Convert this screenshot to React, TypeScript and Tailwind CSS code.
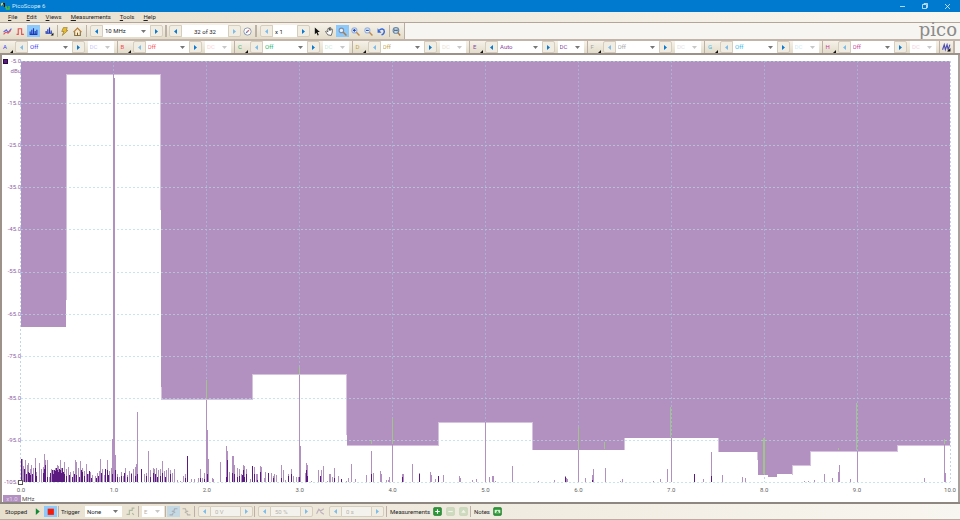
import React from "react"

const channels = [
  { name: "A", value: "Off", color: "text-[#3b3bf5]", dim: "text-[#c9c9fa]", prevOff: true },
  { name: "B", value: "Off", color: "text-[#fb4a4f]", dim: "text-[#fbd3d3]", prevOff: true },
  { name: "C", value: "Off", color: "text-[#23b568]", dim: "text-[#c8ecd8]", prevOff: true },
  { name: "D", value: "Off", color: "text-[#c6a13c]", dim: "text-[#ebe3cc]", prevOff: true },
  { name: "E", value: "Auto", color: "text-[#8a44a2]", dim: "text-[#8a44a2]", prevOff: false },
  { name: "F", value: "Off", color: "text-[#a3a3a3]", dim: "text-[#e2e2e2]", prevOff: true },
  { name: "G", value: "Off", color: "text-[#35b9ec]", dim: "text-[#cdecf8]", prevOff: true },
  { name: "H", value: "Off", color: "text-[#c83c93]", dim: "text-[#f3d2e3]", prevOff: true },
]

const menus = ["File", "Edit", "Views", "Measurements", "Tools", "Help"]

const yLabels = [
  "-5.0", "-15.0", "-25.0", "-35.0", "-45.0", "-55.0",
  "-65.0", "-75.0", "-85.0", "-95.0", "-105.0",
]
const xLabels = [
  "0.0", "1.0", "2.0", "3.0", "4.0", "5.0", "6.0", "7.0", "8.0", "9.0", "10.0",
]

// [x, height] pairs measured from the bottom of the plot
const spikes = [
  [22, 23], [23, 16], [25, 22], [27, 17], [28, 19], [30, 13], [31, 17], [33, 14],
  [35, 24], [36, 10], [39, 19], [41, 13], [43, 15], [44, 28], [45, 22], [47, 22],
  [49, 5], [51, 13], [53, 12], [55, 14], [57, 17], [58, 16], [60, 22], [61, 14],
  [62, 14], [64, 20], [66, 13], [68, 15], [70, 10], [73, 11], [75, 22], [76, 20],
  [78, 14], [80, 21], [82, 14], [84, 11], [86, 18], [88, 8], [90, 10], [92, 7],
  [95, 6], [97, 9], [99, 11], [100, 23], [102, 13], [104, 7], [105, 13], [107, 22],
  [109, 11], [111, 14], [112, 43], [115, 27], [117, 8], [119, 5], [121, 10],
  [123, 6], [125, 14], [127, 7], [129, 11], [131, 9], [133, 13], [135, 15],
  [136, 18], [137, 70], [141, 10], [144, 8], [146, 9], [148, 31], [150, 12],
  [153, 14], [154, 13], [156, 14], [158, 12], [160, 13], [162, 21], [164, 11],
  [166, 12], [168, 14], [170, 12], [172, 9], [174, 13], [177, 2], [180, 1],
  [183, 6], [185, 8], [191, 3], [194, 3], [198, 4], [200, 13], [202, 4], [204, 9],
  [206, 82], [207, 52], [208, 23], [212, 4], [213, 3], [220, 20], [226, 36],
  [227, 31], [229, 10], [232, 26], [233, 26], [234, 17], [237, 14], [239, 13],
  [241, 8], [243, 17], [244, 16], [246, 13], [250, 3], [252, 16], [254, 15],
  [256, 8], [257, 8], [260, 16], [261, 15], [264, 4], [265, 10], [268, 9],
  [271, 9], [273, 6], [274, 8], [276, 7], [281, 17], [283, 12], [285, 2],
  [288, 8], [291, 13], [293, 6], [296, 5], [298, 5], [299, 107], [300, 36],
  [305, 9], [306, 19], [307, 17], [311, 1], [318, 12], [321, 12], [323, 16],
  [327, 1], [329, 8], [330, 8], [332, 5], [334, 14], [338, 6], [341, 3], [346, 1],
  [348, 4], [351, 18], [355, 3], [366, 7], [371, 31], [373, 9], [380, 11],
  [381, 8], [386, 2], [388, 2], [389, 5], [392, 37], [402, 8], [403, 8],
  [412, 18], [419, 9], [430, 10], [431, 7], [435, 3], [438, 6], [443, 7],
  [459, 6], [460, 4], [472, 2], [476, 3], [485, 60], [489, 5], [492, 6],
  [493, 6], [495, 1], [512, 16], [538, 1], [554, 2], [565, 6], [566, 4],
  [567, 3], [578, 32], [585, 4], [592, 7], [593, 13], [605, 14], [620, 1],
  [622, 3], [653, 1], [660, 3], [667, 13], [671, 44], [703, 3], [711, 30],
  [722, 7], [742, 5], [745, 4], [804, 1], [808, 1], [814, 2], [824, 8],
  [832, 4], [838, 10], [839, 17], [850, 3], [857, 31], [924, 4], [944, 37],
  [945, 9],
]

const darkSpikes = [
  [21, 23], [24, 13], [26, 8], [28, 10], [29, 9], [30, 7], [32, 8], [35, 14],
  [36, 6], [43, 9], [44, 13], [45, 17], [47, 5], [50, 9], [52, 12], [53, 8],
  [54, 12], [55, 11], [56, 14], [57, 12], [58, 10], [59, 13], [60, 12], [61, 9],
  [62, 14], [63, 10], [64, 8], [66, 6], [69, 7], [72, 5], [74, 8], [76, 7],
  [79, 5], [81, 12], [82, 10], [84, 6], [87, 8], [89, 11], [91, 4], [96, 4],
  [98, 6], [101, 9], [105, 13], [107, 12], [108, 7], [112, 8], [115, 12],
  [117, 5], [121, 6], [124, 9], [127, 5], [131, 8], [135, 6], [137, 8],
  [141, 13], [146, 6], [150, 5], [153, 9], [155, 8], [157, 5], [160, 6],
  [162, 9], [165, 5], [170, 8], [185, 4], [187, 26], [200, 4], [204, 3],
  [207, 8], [226, 5], [227, 22], [232, 9], [234, 8], [237, 5], [239, 6],
  [242, 7], [243, 12], [244, 5], [246, 8], [252, 16], [254, 8], [257, 2],
  [260, 10], [268, 9], [273, 4], [281, 4], [288, 6], [291, 8], [299, 5],
  [306, 12], [307, 6], [320, 6], [334, 4], [341, 3], [371, 8], [402, 5],
  [419, 8], [438, 6], [565, 5], [592, 2], [694, 8], [711, 6],
]

// [x, top, bottom, width]
const peaks = [
  [206, 380, 399, 1],
  [299, 367, 374, 1],
  [371, 440, 444, 1],
  [392, 418, 444, 1],
  [578, 427, 449, 1],
  [604, 442, 449, 1],
  [670, 407, 437, 1],
  [763, 438, 474, 2],
  [838, 448, 450, 1],
  [856, 403, 450, 1],
  [944, 439, 444, 1],
]

const toPath = (bars: number[][]) =>
  bars.map(([x, h]) => `M${x} ${482 - h}h1V482h-1z`).join("")

const Icon = ({ children }: { children: React.ReactNode }) => (
  <svg viewBox="0 0 16 16" className="size-[9px]" fill="none" stroke="currentColor" strokeWidth="2">
    {children}
  </svg>
)

const Tool = ({
  label,
  active,
  disabled,
  children,
}: {
  label: string
  active?: boolean
  disabled?: boolean
  children: React.ReactNode
}) => (
  <button
    aria-label={label}
    disabled={disabled}
    className={`flex h-full w-[13px] shrink-0 items-center justify-center ${
      active ? "bg-[#8dc9fb]" : ""
    } ${disabled ? "opacity-40" : ""}`}
  >
    <Icon>{children}</Icon>
  </button>
)

const Step = ({ dir, off, label }: { dir: "left" | "right"; off?: boolean; label: string }) => (
  <button
    aria-label={label}
    disabled={off}
    className={`flex h-full w-[13px] shrink-0 items-center justify-center border border-[#d5cdbd] bg-[#f1ede2] ${
      dir === "left" ? "rounded-l-xs" : "rounded-r-xs"
    } ${off ? "text-[#7fbce8]" : "text-[#0a79cf]"}`}
  >
    <svg viewBox="0 0 3 5" className="h-[5px] w-[3px]" fill="currentColor">
      {dir === "left" ? <path d="M3 0v5L0 2.5z" /> : <path d="M0 0v5l3-2.5z" />}
    </svg>
  </button>
)

const Dropdown = ({
  label,
  id,
  value,
  className = "",
  disabled,
}: {
  label?: string
  id?: string
  value: string
  className?: string
  disabled?: boolean
}) => (
  <span className={`flex h-full items-center bg-white pr-1 pl-[2px] ${className}`}>
    <select
      id={id}
      aria-label={label}
      disabled={disabled}
      className="min-w-0 flex-1 appearance-none bg-transparent opacity-100 outline-none"
    >
      <option>{value}</option>
    </select>
    <svg viewBox="0 0 5 3" className={`h-[3px] w-[5px] shrink-0 ${disabled ? "opacity-40" : ""}`} fill="#777">
      <path d="M0 0h5L2.5 3z" />
    </svg>
  </span>
)

const Separator = () => <span className="h-full w-px shrink-0 bg-[#bdb0a4]" />

const Corner = () => (
  <svg viewBox="0 0 3 3" className="size-[3px] self-end" fill="#111">
    <path d="M3 0v3H0z" />
  </svg>
)

const TitleBar = () => (
  <header className="flex h-3 shrink-0 items-center bg-[#007acf] text-[#d8ebf9]">
    <svg viewBox="0 0 9 8" className="ml-px h-2 w-[9px]">
      <path d="M0 3.5q1.5-4 3 0" fill="none" stroke="#f2d335" strokeWidth="1.5" />
      <path d="M2 1h2v4H3z" fill="#111" />
      <path d="M4 5h1.5v2H8V4" fill="none" stroke="#49b93d" strokeWidth="1.5" />
    </svg>
    <h1 className="ml-[2px] flex-1">PicoScope 6</h1>
    <div className="flex items-center gap-[17px] pr-[10px]">
      <button aria-label="Minimize">
        <svg viewBox="0 0 5 5" className="size-[5px]" stroke="#fff" strokeWidth=".7">
          <path d="M0 2.5h5" />
        </svg>
      </button>
      <button aria-label="Restore">
        <svg viewBox="0 0 6 6" className="size-[6px]" fill="none" stroke="#fff" strokeWidth=".7">
          <path d="M.5 1.5h4v4h-4zM2 1.5v-1h3.5v4h-1" />
        </svg>
      </button>
      <button aria-label="Close">
        <svg viewBox="0 0 5 5" className="size-[5px]" stroke="#fff" strokeWidth=".7">
          <path d="M0 0l5 5M5 0L0 5" />
        </svg>
      </button>
    </div>
  </header>
)

const MenuBar = () => (
  <nav className="flex h-[11px] shrink-0 items-center gap-[9px] border-b border-[#b3a698] bg-gradient-to-r from-[#e8e0cf] to-[#f8f6f0] pl-2">
    {menus.map((menu) => (
      <button key={menu}>
        <span className="underline">{menu[0]}</span>
        {menu.slice(1)}
      </button>
    ))}
  </nav>
)

const MainToolbar = () => (
  <div className="flex h-4 shrink-0 items-start justify-between">
    <div className="flex h-full items-center border-r border-[#b9aca0] bg-gradient-to-b from-[#f6f2ea] to-[#e3dcca] py-[2px] pl-px">
      <Tool label="Persistence mode">
        <path d="M1 9l5-4 3 5 6-7" stroke="#5d6be0" />
        <path d="M1 13l4-4 4 2 5-5" stroke="#e2525c" />
      </Tool>
      <Tool label="Scope mode">
        <path d="M1 13h3V3h6v10h4" stroke="#e6524f" />
      </Tool>
      <Tool label="Spectrum mode" active>
        <path d="M1 13h14M2 13V8M5 13V5M8 13V2M11 13V7M14 13V5" stroke="#1a35b5" />
      </Tool>
      <span className="w-[3px]" />
      <Tool label="Spectrum options">
        <path d="M1 11h12M2 11V7M5 11V4M8 11V1M11 11V6" stroke="#1a35b5" />
        <path d="M15 10v5h-5z" fill="#111" stroke="none" />
      </Tool>
      <span className="w-px" />
      <Separator />
      <Tool label="Auto setup">
        <path d="M6 1h7l-2 5h3L4 15l3-7H3z" fill="#e7bd31" stroke="#8a6a23" strokeWidth="1" />
      </Tool>
      <Tool label="Home">
        <path d="M3 8v7h10V8" fill="#fff1cc" stroke="#86704a" />
        <path d="M1 9l7-7 7 7" stroke="#b7792c" />
        <path d="M8 10v5" stroke="#7b5428" />
      </Tool>
      <span className="w-[2px]" />
      <Separator />
      <span className="w-[3px]" />
      <Step dir="left" label="Lower frequency" />
      <Dropdown label="Frequency range" value="10 MHz" className="w-[47px]" />
      <Step dir="right" label="Higher frequency" />
      <span className="mx-[2px] h-full w-[2px] bg-[#bdb0a4]" />
      <Step dir="left" label="Previous buffer" />
      <input aria-label="Buffer" defaultValue="32 of 32" className="h-full w-[46px] bg-white text-center outline-none" />
      <Step dir="right" label="Next buffer" off />
      <Tool label="Buffer navigator">
        <circle cx="8" cy="8" r="6.5" fill="#fff" stroke="#8291a8" strokeWidth="1.5" />
        <path d="M12 4L9 9 7 7z" fill="#e04343" stroke="none" />
        <path d="M4 12l3-5 2 2z" fill="#3f62ba" stroke="none" />
      </Tool>
      <span className="w-px" />
      <span className="h-full w-[2px] bg-[#bdb0a4]" />
      <span className="w-[3px]" />
      <Step dir="left" label="Zoom factor down" off />
      <input aria-label="Zoom factor" defaultValue="x 1" className="h-full w-[24px] bg-white pl-[2px] outline-none" />
      <Step dir="right" label="Zoom factor up" />
      <Tool label="Select">
        <path d="M5 1v12l3-3 2 5 2-1-2-5h4z" fill="#111" stroke="none" />
      </Tool>
      <Tool label="Hand">
        <path
          d="M5 14L1 8l2-1 2 2V3l2-1 1 4V1h2v5l2-3 1 1v5l-2 6z"
          fill="#fff"
          stroke="#333"
          strokeWidth="1.2"
        />
      </Tool>
      <Tool label="Zoom window" active>
        <circle cx="6" cy="6" r="4" fill="#e6f2fc" stroke="#7b8fab" />
        <path d="M9 9l6 6" stroke="#b07845" strokeWidth="2.5" />
      </Tool>
      <Tool label="Zoom in">
        <circle cx="6" cy="6" r="4.5" fill="#e6f2fc" stroke="#9db4dc" />
        <path d="M9.5 9.5L15 15" stroke="#c08a4c" strokeWidth="2.5" />
        <path d="M6 3.500v5M3.500 6h5" stroke="#2546b8" />
      </Tool>
      <Tool label="Zoom out">
        <circle cx="6" cy="6" r="4.5" fill="#e6f2fc" stroke="#9db4dc" />
        <path d="M9.5 9.5L15 15" stroke="#c08a4c" strokeWidth="2.5" />
        <path d="M3.5 6h5" stroke="#2546b8" />
      </Tool>
      <Tool label="Undo zoom">
        <path d="M4 6c3-4 9-3 9 2 0 3-2 5-5 6" stroke="#3568d8" strokeWidth="2.5" />
        <path d="M1 2v8h7z" fill="#3568d8" stroke="none" />
      </Tool>
      <span className="w-px" />
      <Separator />
      <Tool label="Zoom full">
        <circle cx="7" cy="6" r="5" fill="#e3eff7" stroke="#6a86a4" />
        <path d="M10.5 10l4 5" stroke="#a87842" strokeWidth="2.5" />
        <path d="M4 6h6M5 4v4M9 4v4" stroke="#31577a" strokeWidth="1.5" />
      </Tool>
      <span className="w-px" />
    </div>
    <span className="pr-[3px] font-['DejaVu_Serif',serif] text-[18px] leading-[14px] text-[#8b8b8b]">
      pico
    </span>
  </div>
)

const ChannelToolbar = () => (
  <div className="flex h-4 shrink-0 border-y-2 border-t-[#c3b4a9] border-b-[#9c9289]">
    <div className="flex flex-1 bg-gradient-to-b from-[#f6f2ea] to-[#e3dcca]">
      {channels.map((c) => (
        <div key={c.name} className="flex h-full flex-1 items-center">
          <button
            aria-label={`Channel ${c.name} options`}
            className={`flex h-full w-[13px] shrink-0 items-center gap-[2px] pl-[3px] ${c.color}`}
          >
            <span className="flex-1 text-left">{c.name}</span>
            <Corner />
          </button>
          <span className="w-[2px] shrink-0" />
          <Step dir="left" label={`Channel ${c.name} smaller range`} off={c.prevOff} />
          <Dropdown
            label={`Channel ${c.name} range`}
            value={c.value}
            className={`min-w-0 flex-1 ${c.color}`}
          />
          <Step dir="right" label={`Channel ${c.name} larger range`} />
          <span className="w-[3px] shrink-0" />
          <Dropdown
            label={`Channel ${c.name} coupling`}
            value="DC"
            className={`w-[26px] shrink-0 ${c.dim}`}
            disabled={c.prevOff}
          />
          <span className="w-[3px] shrink-0" />
          <Separator />
        </div>
      ))}
      <Tool label="Digital channels">
        <path d="M1 12l3-9 2 9 3-9 2 9 3-9" stroke="#4b4bb2" />
        <path d="M15 9v6H9z" fill="#111" stroke="none" />
      </Tool>
      <span className="w-[2px] bg-[#c3b4a9]" />
    </div>
    <span className="w-[5px]" />
  </div>
)

const Spectrum = () => (
  <svg
    viewBox="21 61 929 421"
    preserveAspectRatio="none"
    shapeRendering="crispEdges"
    className="size-full overflow-visible"
  >
    <path
      d="M21 61H950V445H898V451H810V465H792V474H777V477H768V475H758V452H718V438H624V450H532V422H438V445H347V374H252V399H161V74H66V327H21z"
      fill="#b290c0"
    />
    <path
      d="M66.500 74V300M66 74.500H161M160.500 74V210M161.500 387V399.500H252.500V375M252 374.500H347M346.500 374V435M347 445.500H438.500V423M438 422.500H532.500V450M624.500 450V438M718.500 438V452M757.500 452V460M792 474.500V465.500H810.500V451.500H897.500V445.500H950"
      fill="none"
      stroke="#d6c2de"
    />
    {yLabels.map((label, i) => (
      <path key={label} d={`M21 ${61.5 + i * 42.1}H950`} stroke="#aedbe6" strokeDasharray="2 2" opacity=".7" />
    ))}
    {xLabels.map((label, i) => (
      <path key={label} d={`M${20.5 + i * 93} 61V482`} stroke="#a4c4e0" strokeDasharray="2 2" opacity=".7" />
    ))}
    <path d={toPath(spikes)} fill="#b290c0" />
    <path d={toPath(darkSpikes)} fill="#5b1a80" />
    <path d="M113 74h1v4h1V482h-2z" fill="#b290c0" />
    {peaks.map(([x, top, bottom, width]) => (
      <rect key={x} x={x} y={top} width={width} height={bottom - top} fill="#9fc48c" />
    ))}
    <rect x="18.5" y="480.5" width="4" height="4" fill="#fff" stroke="#555" />
  </svg>
)

const Graph = () => (
  <main className="grid min-h-0 flex-1 grid-cols-[19px_1fr_8px] grid-rows-[1fr_13px_7px] border-x-2 border-l-[#9c9289] border-r-[#a8a09a] bg-white pt-[6px] text-[#5f5f5f]">
    <div className="flex flex-col justify-between text-[#8f5ea5]">
      {yLabels.map((label, i) => (
        <div key={label} className="flex h-0 flex-col items-end">
          <span className="-mt-[5px] flex items-center gap-[3px] leading-[10px]">
            {i === 0 && <span className="size-[5px] border border-[#2b0c40] bg-[#5b1a80]" />}
            {label}
          </span>
          {i === 0 && <span className="leading-[10px]">dBu</span>}
        </div>
      ))}
    </div>
    <div className="min-h-0 min-w-0">
      <Spectrum />
    </div>
    <span />
    <span />
    <div className="flex items-center justify-between pt-[2px]">
      {xLabels.map((label) => (
        <span key={label} className="flex w-0 justify-center">
          {label}
        </span>
      ))}
    </div>
    <span />
    <span className="ml-px flex h-[7px] items-center justify-center bg-[#b290c0] text-[#e2d4e8]">
      x1.0
    </span>
    <span className="flex h-[7px] items-center pl-px text-[#555]">MHz</span>
    <span />
  </main>
)

const StatusBar = () => (
  <footer className="flex h-[18px] shrink-0 items-center border-t-2 border-b border-t-[#8e8680] border-b-[#b9aca0] bg-gradient-to-r from-[#e8e0cf] to-[#f8f6f0] py-[2px] pl-[5px]">
    <span className="w-[26px]">Stopped</span>
    <Tool label="Start">
      <path d="M5 2v12l7-6z" fill="#128a35" stroke="none" />
    </Tool>
    <Tool label="Stop" active>
      <path d="M3 3h11v11H3z" fill="#f51a0a" stroke="none" />
    </Tool>
    <span className="w-px" />
    <Separator />
    <label htmlFor="trigger" className="w-[26px] pl-[2px]">
      Trigger
    </label>
    <Dropdown id="trigger" value="None" className="w-[37px]" />
    <span className="w-[2px]" />
    <Tool label="Advanced triggers" disabled>
      <path d="M1 13h5V6h5V2h4M11 11l3 3" stroke="#567b56" />
    </Tool>
    <span className="w-px" />
    <Separator />
    <span className="w-[3px]" />
    <Dropdown label="Trigger channel" value="E" className="w-[22px] text-[#b8b2a8]" disabled />
    <span className="w-px" />
    <Separator />
    <span className="w-px" />
    <Tool label="Rising edge" active disabled>
      <path d="M1 14h5l4-11h5M5 7l6 3" stroke="#46618c" />
    </Tool>
    <Tool label="Falling edge" disabled>
      <path d="M1 3h5l4 11h5M5 10l6-3" stroke="#6b6b6b" />
    </Tool>
    <span className="w-px" />
    <Separator />
    <span className="w-[3px]" />
    <Step dir="left" label="Threshold down" off />
    <input aria-label="Threshold" disabled defaultValue="0 V" className="h-full w-[29px] border-y border-[#d5cdbd] bg-[#f4f2ec] pl-1 text-[#b8b4ac]" />
    <Step dir="right" label="Threshold up" off />
    <span className="w-px" />
    <Separator />
    <span className="w-[3px]" />
    <Step dir="left" label="Pre-trigger down" off />
    <input aria-label="Pre-trigger" disabled defaultValue="50 %" className="h-full w-[29px] border-y border-[#d5cdbd] bg-[#f4f2ec] pl-1 text-[#b8b4ac]" />
    <Step dir="right" label="Pre-trigger up" off />
    <span className="w-px" />
    <Tool label="Post-trigger delay" disabled>
      <path d="M1 12l4-8 3 3 6-4M8 9l6 4" stroke="#765f91" />
    </Tool>
    <span className="w-[2px]" />
    <Step dir="left" label="Delay down" off />
    <input aria-label="Delay" disabled defaultValue="0 s" className="h-full w-[29px] border-y border-[#d5cdbd] bg-[#f4f2ec] pl-1 text-[#b8b4ac]" />
    <Step dir="right" label="Delay up" off />
    <span className="w-[2px]" />
    <Separator />
    <span className="w-[44px] pl-[3px]">Measurements</span>
    <Tool label="Add measurement">
      <rect x="1" y="1" width="14" height="14" rx="2" fill="#2b9938" stroke="#146a20" strokeWidth="1" />
      <path d="M8 4v8M4 8h8" stroke="#fff" />
    </Tool>
    <Tool label="Delete measurement" disabled>
      <rect x="1" y="1" width="14" height="14" rx="2" fill="#9bc48f" stroke="#7aa66e" strokeWidth="1" />
      <path d="M4 8h8" stroke="#fff" />
    </Tool>
    <Tool label="Edit measurement" disabled>
      <rect x="1" y="1" width="14" height="14" rx="2" fill="#9bc48f" stroke="#7aa66e" strokeWidth="1" />
      <path d="M4 10h8L8 5z" fill="#fff" stroke="none" />
    </Tool>
    <Separator />
    <span className="w-[20px] pl-[3px]">Notes</span>
    <Tool label="Show notes">
      <rect x="1" y="1" width="14" height="14" rx="2" fill="#2b9938" stroke="#146a20" strokeWidth="1" />
      <path d="M3 11V5h10v6z" fill="#d6f0d2" stroke="none" />
      <path d="M5 10h6L8 6z" fill="#2b9938" stroke="none" />
    </Tool>
  </footer>
)

const App = () => {
  return (
    <div className="flex h-screen flex-col overflow-hidden bg-[#f7f5f1] font-['Roboto','Noto_Sans',sans-serif] text-[6px] leading-[8px] text-[#1d1d1d]">
      <TitleBar />
      <MenuBar />
      <MainToolbar />
      <ChannelToolbar />
      <Graph />
      <StatusBar />
    </div>
  )
}

export default App
